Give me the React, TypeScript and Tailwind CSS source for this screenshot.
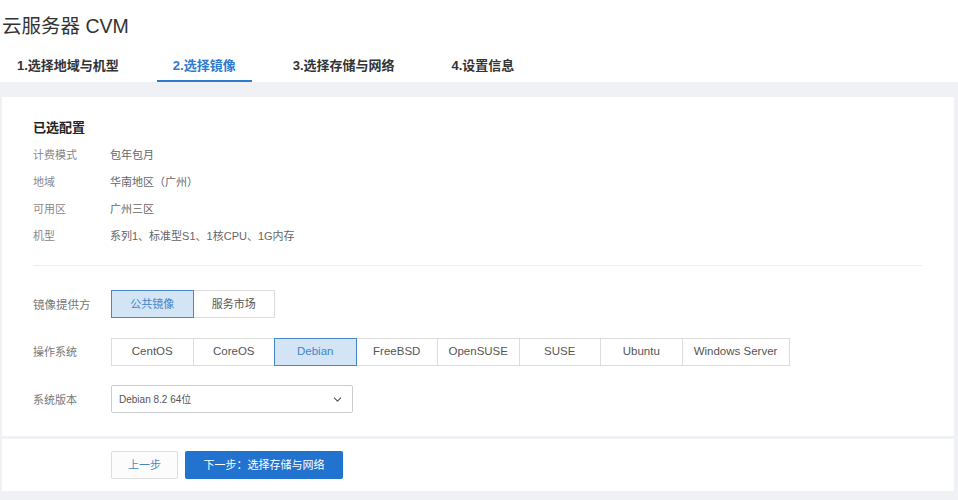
import React from 'react';
import { ChevronDown } from 'lucide-react';

const tabs = ['1.选择地域与机型', '2.选择镜像', '3.选择存储与网络', '4.设置信息'];

const summary = [
  { label: '计费模式', value: '包年包月' },
  { label: '地域', value: '华南地区（广州）' },
  { label: '可用区', value: '广州三区' },
  { label: '机型', value: '系列1、标准型S1、1核CPU、1G内存' },
];

const osList = ['CentOS', 'CoreOS', 'Debian', 'FreeBSD', 'OpenSUSE', 'SUSE', 'Ubuntu', 'Windows Server'];

const Segment = ({ label, active, first }: { label: string; active: boolean; first: boolean }) => (
  <div
    className={`h-[28px] px-[10px] flex items-center justify-center border whitespace-nowrap ${
      label === 'Windows Server' ? 'min-w-[108px]' : 'min-w-[82.5px]'
    } ${first ? '' : 'ml-[-1px]'} ${
      active ? 'relative z-10 border-[#4a86c5] bg-[#d3e4f5] text-[#3f86cc]' : 'border-[#dddddd] bg-white text-[#555555]'
    }`}
  >
    {label}
  </div>
);

const App: React.FC = () => {
  return (
    <div className="w-[958px] h-[500px] overflow-hidden bg-[#f0f1f5] text-[11px] text-[#666666] font-['Liberation_Sans','Noto_Sans_CJK_SC',sans-serif]">
      {/* Header */}
      <div className="bg-white h-[82px] flex flex-col">
        <h1 className="h-[50px] pl-[2px] pt-[13px] text-[19.5px] leading-[26px] font-normal text-[#333333]">云服务器 CVM</h1>
        <div className="flex pl-px">
          {tabs.map((tab, i) => (
            <div
              key={tab}
              className={`h-[32px] px-4 pt-[6px] text-[13px] leading-[20px] font-bold whitespace-nowrap ${
                i === 0 ? 'mr-[22px]' : 'mr-[25px]'
              } ${i === 1 ? 'border-b-2 border-[#2d7ad0] text-[#2d7ad0]' : 'text-[#333333]'}`}
            >
              {tab}
            </div>
          ))}
        </div>
      </div>

      {/* Main card */}
      <div className="mt-[15px] ml-[2px] w-[952px] h-[339px] bg-white px-[31px] pt-[22px]">
        <h2 className="text-[13px] leading-[18px] font-bold text-[#222222]">已选配置</h2>
        <div className="mt-[5px] flex flex-col">
          {summary.map((row) => (
            <div key={row.label} className="flex h-[27px] items-center">
              <span className="w-[77px] text-[#888888]">{row.label}</span>
              <span className="text-[#666666]">{row.value}</span>
            </div>
          ))}
        </div>
        <div className="mt-[15px] w-[889px] border-t border-[#eeeeee]" />

        <div className="mt-[24px] flex items-center">
          <span className="w-[78px] pt-[4px] text-[11.5px] text-[#777777]">镜像提供方</span>
          <div className="flex">
            {['公共镜像', '服务市场'].map((item, i) => (
              <Segment key={item} label={item} active={i === 0} first={i === 0} />
            ))}
          </div>
        </div>

        <div className="mt-[20px] flex items-center">
          <span className="w-[78px] pt-px text-[#777777]">操作系统</span>
          <div className="flex text-[11.5px]">
            {osList.map((os, i) => (
              <Segment key={os} label={os} active={os === 'Debian'} first={i === 0} />
            ))}
          </div>
        </div>

        <div className="mt-[19px] flex items-center">
          <span className="w-[78px] pt-[2px] text-[#777777]">系统版本</span>
          <div className="w-[242px] h-[28px] border border-[#cccccc] rounded-[2px] flex items-center justify-between pl-[7px] pr-[8px] text-[10px] text-[#555555]">
            <span>Debian 8.2 64位</span>
            <ChevronDown className="w-[13px] h-[13px] text-[#555555]" strokeWidth={2} />
          </div>
        </div>
      </div>

      {/* Footer */}
      <div className="mt-[3px] ml-[2px] w-[952px] h-[52px] bg-white pl-[109px] flex items-center gap-[7px]">
        <button className="w-[67px] h-[28px] border border-[#dddddd] rounded-[2px] bg-[#fcfcfc] text-[#4a86c5]">上一步</button>
        <button className="w-[158px] h-[28px] rounded-[2px] bg-[#2272d0] text-white">下一步：选择存储与网络</button>
      </div>
    </div>
  );
};

export default App;
